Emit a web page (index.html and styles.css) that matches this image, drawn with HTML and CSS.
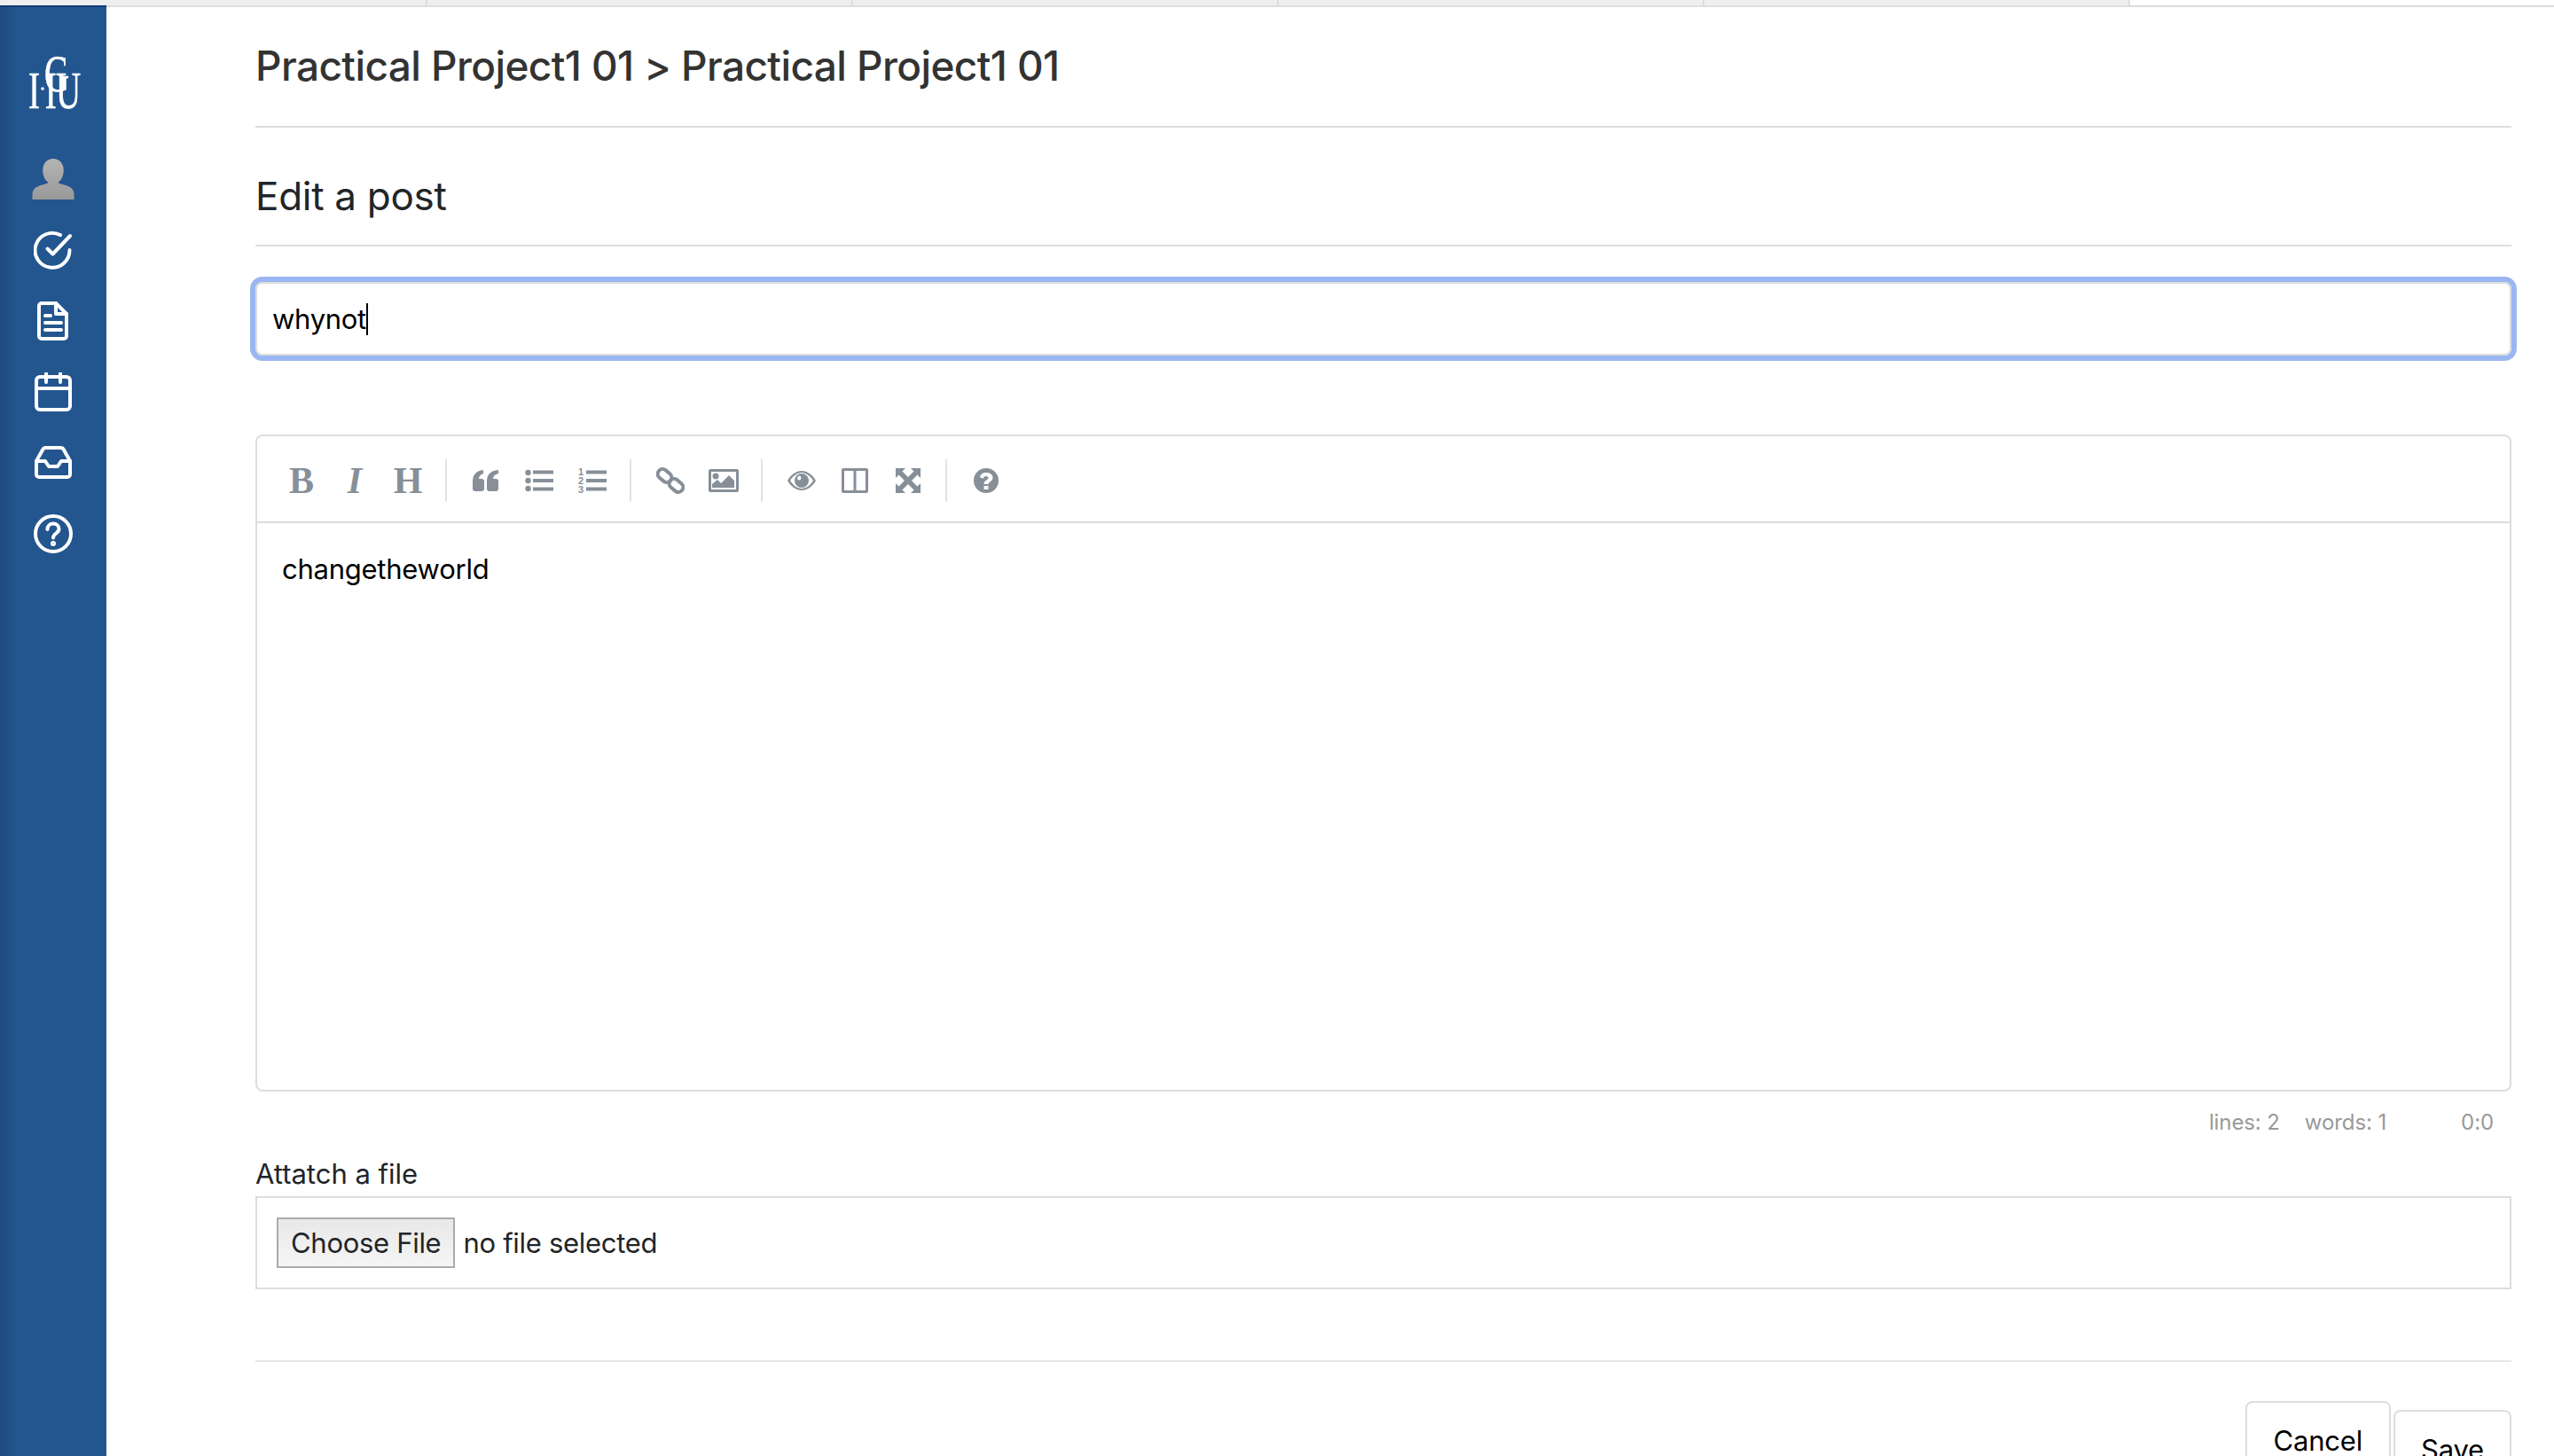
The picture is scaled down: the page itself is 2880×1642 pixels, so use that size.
FILE: index.html
```html
<!DOCTYPE html>
<html lang="en">
<head>
    <meta charset="UTF-8">
    <title>Edit a post</title>
    <link rel="stylesheet" href="styles.css">
</head>
<body>
    <div class="tabs">
        <div class="tab"></div>
        <div class="tab"></div>
        <div class="tab"></div>
        <div class="tab"></div>
        <div class="tab"></div>
        <div class="tab active"></div>
    </div>

    <div class="page">
        <nav class="sidebar">
            <svg class="logo" viewBox="0 0 64 64">
                <text class="logo-text" transform="scale(.65 1)" x="6 34 35 54" y="62 43 62 62">IGIU</text>
                <circle cx="20" cy="40" r="1.800" fill="#fff"/>
            </svg>
            <svg class="person" viewBox="0 0 48 48">
                <defs>
                    <linearGradient id="personFill" x1="0" y1="0" x2="0" y2="1">
                        <stop offset="0" stop-color="#b4b4b4"/>
                        <stop offset="1" stop-color="#999"/>
                    </linearGradient>
                </defs>
                <path fill="url(#personFill)" d="M24 0c7 0 12 5.500 12 13 0 6-2 11-6 14 0 1 1 1.500 3 2 8 2 15 4 15 12v6H0v-6c0-8 7-10 15-12 2-.5 3-1 3-2-4-3-6-8-6-14C12 5.500 17 0 24 0z"/>
            </svg>
            <a class="nav-item">
                <svg viewBox="0 0 44 44"><path d="M40.500 22A19.500 19.500 0 1 1 30 5"/><path d="M15.500 20.500l6 6L41 6"/></svg>
            </a>
            <a class="nav-item">
                <svg viewBox="0 0 44 44"><path d="M9 2h16l12 12v25a3 3 0 0 1-3 3H9a3 3 0 0 1-3-3V5a3 3 0 0 1 3-3z"/><path d="M25 2v12h12"/><path d="M13 16h6M13 24h18M13 32h18"/></svg>
            </a>
            <a class="nav-item">
                <svg viewBox="0 0 44 44"><rect x="3" y="5" width="38" height="37" rx="4"/><path d="M3 18h38M14 1v10M30 1v10"/></svg>
            </a>
            <a class="nav-item">
                <svg viewBox="0 0 44 44"><path d="M13 5h18c1 0 2 .5 2.500 1.500L41 20v15a3 3 0 0 1-3 3H6a3 3 0 0 1-3-3V20l7.500-13.500C11 5.500 12 5 13 5z"/><path d="M3 20h10l4 6h10l4-6h10"/></svg>
            </a>
            <a class="nav-item">
                <svg viewBox="0 0 44 44"><circle cx="22" cy="22" r="20"/><path d="M15.500 17c0-4 3-6.500 6.500-6.500s6.500 2.500 6.500 6c0 5-6.500 5-6.500 10"/><circle class="dot" cx="22" cy="33" r="1"/></svg>
            </a>
        </nav>

        <main class="content">
            <h1 class="crumb">Practical Project1 01 &gt; Practical Project1 01</h1>
            <h2 class="heading">Edit a post</h2>

            <div class="title-input"><span>whynot</span><span class="caret"></span></div>

            <div class="editor">
                <div class="toolbar">
                    <span class="tool letter">B</span>
                    <span class="tool letter italic">I</span>
                    <span class="tool letter">H</span>
                    <i class="sep"></i>
                    <span class="tool">
                        <svg viewBox="0 0 32 32"><path d="M1 17C1 9 5 5 13 4v4c-3 1-5 3-5 6h3c2 0 3 1 3 3v8c0 2-1 3-3 3H4c-2 0-3-1-3-3z"/><path d="M17 17c0-8 4-12 13-13v4c-4 1-6 3-6 6h3c2 0 3 1 3 3v8c0 2-1 3-3 3h-7c-2 0-3-1-3-3z"/></svg>
                    </span>
                    <span class="tool">
                        <svg viewBox="0 0 32 32"><circle cx="3.500" cy="7" r="3.200"/><circle cx="3.500" cy="16" r="3.200"/><circle cx="3.500" cy="25" r="3.200"/><path d="M9 4.500h23v4H9zM9 14h23v4H9zM9 23.500h23v4H9z"/></svg>
                    </span>
                    <span class="tool">
                        <svg viewBox="0 0 32 32"><text x="0" y="10" class="ol-num">1</text><text x="0" y="20" class="ol-num">2</text><text x="0" y="30" class="ol-num">3</text><path d="M9 4.500h23v4H9zM9 14h23v4H9zM9 23.500h23v4H9z"/></svg>
                    </span>
                    <i class="sep"></i>
                    <span class="tool">
                        <svg class="line" viewBox="0 0 32 32"><rect x="1" y="5" width="17" height="11" rx="5.500" transform="rotate(40 9.500 10.500)"/><rect x="14" y="16" width="17" height="11" rx="5.500" transform="rotate(40 22.500 21.500)"/></svg>
                    </span>
                    <span class="tool">
                        <svg viewBox="0 0 36 32"><path fill-rule="evenodd" d="M3 3h30a2 2 0 0 1 2 2v22a2 2 0 0 1-2 2H3a2 2 0 0 1-2-2V5a2 2 0 0 1 2-2zm1 3v20h28V6z"/><circle cx="9" cy="11" r="3.500"/><path d="M5 24v-4l6-5 4 4 9-9 6 6v8z"/></svg>
                    </span>
                    <i class="sep"></i>
                    <span class="tool">
                        <svg viewBox="0 0 32 32"><path fill-rule="evenodd" d="M0 16C4 9 10 5 16 5s12 4 16 11c-4 7-10 11-16 11S4 23 0 16zm3 0c3 5 8 9 13 9s10-4 13-9c-3-5-8-9-13-9S6 11 3 16z"/><path fill-rule="evenodd" d="M16 8a8 8 0 1 0 0 16 8 8 0 0 0 0-16zm-2 2.500a3 3 0 0 1 0 5 3 3 0 0 1-3-1.500c0-2 1.500-3.500 3-3.500z"/></svg>
                    </span>
                    <span class="tool">
                        <svg viewBox="0 0 32 32"><path fill-rule="evenodd" d="M3 2h26a2 2 0 0 1 2 2v24a2 2 0 0 1-2 2H3a2 2 0 0 1-2-2V4a2 2 0 0 1 2-2zm1 3v22h10.500V5zm13.500 0v22H28V5z"/></svg>
                    </span>
                    <span class="tool">
                        <svg viewBox="0 0 32 32"><path d="M2 2h11L9.500 5.500 16 12l6.500-6.500L19 2h11v11l-3.500-3.500L20 16l6.500 6.500L30 19v11H19l3.500-3.500L16 20l-6.500 6.500L13 30H2V19l3.500 3.500L12 16 5.500 9.500 2 13z"/></svg>
                    </span>
                    <i class="sep"></i>
                    <span class="tool">
                        <svg viewBox="0 0 32 32"><path fill-rule="evenodd" d="M16 2a14 14 0 1 1 0 28 14 14 0 0 1 0-28zm-2.500 20v4h5v-4zM16 7c-4 0-6.500 2-7 5.500l4 1c.3-1.500 1.300-2.500 3-2.500 1.500 0 2.500.8 2.500 2 0 2.500-5 2.500-5 7h5c0-2.500 5-3 5-7.500C23.500 9 20 7 16 7z"/></svg>
                    </span>
                </div>
                <div class="editor-body">changetheworld</div>
            </div>

            <div class="statusbar">
                <span>lines: 2</span>
                <span>words: 1</span>
                <span class="cursor-pos">0:0</span>
            </div>

            <label class="file-label">Attatch a file</label>
            <div class="file-box">
                <span class="file-btn">Choose File</span>
                <span>no file selected</span>
            </div>

            <hr class="rule">

            <div class="actions">
                <button class="btn">Cancel</button>
                <button class="btn save">Save</button>
            </div>
        </main>
    </div>
</body>
</html>
```

FILE: styles.css
```css
html, body {
    margin: 0;
    height: 1642px;
    overflow: hidden;
    background: white;
}
body {
    font-family: Inter, 'Liberation Sans', sans-serif;
    color: #212529;
}
.tabs {
    display: grid;
    grid-template-columns: repeat(6, 1fr);
    height: 6px;
    border-bottom: 2px solid #ddd;
    margin-bottom: -2px;
}
.tab {
    background: #efefef;
    border-left: 2px solid #ddd;
}
.tab:first-child {
    border-left: none;
}
.tab.active {
    background: white;
}
.page {
    display: flex;
    height: 1636px;
}
.sidebar {
    position: relative;
    width: 120px;
    flex: none;
    display: flex;
    flex-direction: column;
    align-items: center;
    background: linear-gradient(to right, #1f4a80, #23568f 20px);
    border-top: 2px solid #123d7a;
    box-sizing: border-box;
}
.logo {
    width: 64px;
    height: 64px;
    margin-top: 52px;
    overflow: visible;
}
.logo-text {
    font-family: 'Liberation Serif', serif;
    font-size: 60px;
    fill: white;
    stroke: white;
    stroke-width: .6;
}
.person {
    width: 48px;
    height: 47px;
    margin-top: 55px;
    margin-bottom: 16px;
}
.nav-item {
    height: 80px;
    display: flex;
    align-items: center;
    justify-content: center;
}
.nav-item svg {
    width: 44px;
    height: 44px;
    fill: none;
    stroke: white;
    stroke-width: 4;
    stroke-linecap: round;
    stroke-linejoin: round;
}
.nav-item .dot {
    fill: white;
}
.content {
    flex: 1;
    min-width: 0;
    padding: 0 48px 0 168px;
}
.crumb {
    margin: 0;
    height: 138px;
    box-sizing: border-box;
    padding-top: 40px;
    font-size: 46px;
    line-height: 56px;
    font-weight: 500;
    letter-spacing: -0.6px;
    color: #333;
    border-bottom: 2px solid #ddd;
}
.heading {
    margin: 0;
    height: 134px;
    box-sizing: border-box;
    padding-top: 50px;
    font-size: 44px;
    line-height: 54px;
    font-weight: 400;
    letter-spacing: -0.3px;
    border-bottom: 2px solid #ddd;
}
.title-input {
    display: flex;
    align-items: center;
    height: 83px;
    margin-top: 40px;
    padding-left: 17px;
    box-sizing: border-box;
    border: 2px solid #ddd;
    border-radius: 8px;
    box-shadow: 0 0 0 6px #9ab6f3;
    font-size: 31px;
    letter-spacing: -0.3px;
    color: black;
}
.caret {
    width: 2px;
    height: 36px;
    background: black;
}
.editor {
    margin-top: 89px;
    height: 741px;
    box-sizing: border-box;
    border: 2px solid #ddd;
    border-radius: 8px;
}
.toolbar {
    display: flex;
    align-items: center;
    height: 98px;
    box-sizing: border-box;
    padding: 21px 0 17px 20px;
    border-bottom: 2px solid #ddd;
}
.tool {
    width: 60px;
    height: 60px;
    flex: none;
    display: flex;
    align-items: center;
    justify-content: center;
    color: #878f98;
}
.tool svg {
    height: 32px;
    fill: #878f98;
}
.tool svg.line {
    fill: none;
    stroke: #878f98;
    stroke-width: 4;
}
.letter {
    font-family: 'Liberation Serif', serif;
    font-size: 42px;
    font-weight: 700;
}
.italic {
    font-style: italic;
}
.ol-num {
    font-family: 'Liberation Sans', sans-serif;
    font-size: 11px;
    font-weight: 700;
}
.sep {
    width: 2px;
    height: 48px;
    margin: 0 14px 0 12px;
    flex: none;
    background: #e2e2e2;
}
.editor-body {
    padding: 32px 28px;
    font-size: 31px;
    line-height: 40px;
    letter-spacing: -0.25px;
    color: black;
}
.statusbar {
    display: flex;
    justify-content: flex-end;
    gap: 28px;
    height: 81px;
    padding: 20px 20px 0 0;
    box-sizing: border-box;
    font-size: 24px;
    line-height: 30px;
    letter-spacing: -0.1px;
    color: #999;
}
.cursor-pos {
    margin-left: 56px;
}
.file-label {
    display: block;
    font-size: 31px;
    line-height: 24px;
    height: 37px;
}
.file-box {
    display: flex;
    align-items: center;
    gap: 9px;
    height: 105px;
    padding-left: 22px;
    box-sizing: border-box;
    border: 2px solid #ddd;
    font-size: 31px;
    letter-spacing: -0.3px;
}
.file-btn {
    height: 57px;
    padding: 0 14px;
    display: flex;
    align-items: center;
    box-sizing: border-box;
    border: 2px solid #aaa;
    background: linear-gradient(#e8e8e8, #f5f5f5);
}
.rule {
    height: 2px;
    margin: 80px 0 0;
    border: none;
    background: #e6e6e6;
}
.actions {
    display: flex;
    justify-content: flex-end;
    align-items: flex-start;
    gap: 3px;
    margin-top: 44px;
}
.btn {
    height: 88px;
    padding: 0 30px;
    border: 2px solid #ddd;
    border-radius: 8px;
    background: white;
    font-family: inherit;
    font-size: 31px;
    letter-spacing: -0.2px;
    color: black;
}
.save {
    margin-top: 10px;
    padding: 0 29px;
}
```
